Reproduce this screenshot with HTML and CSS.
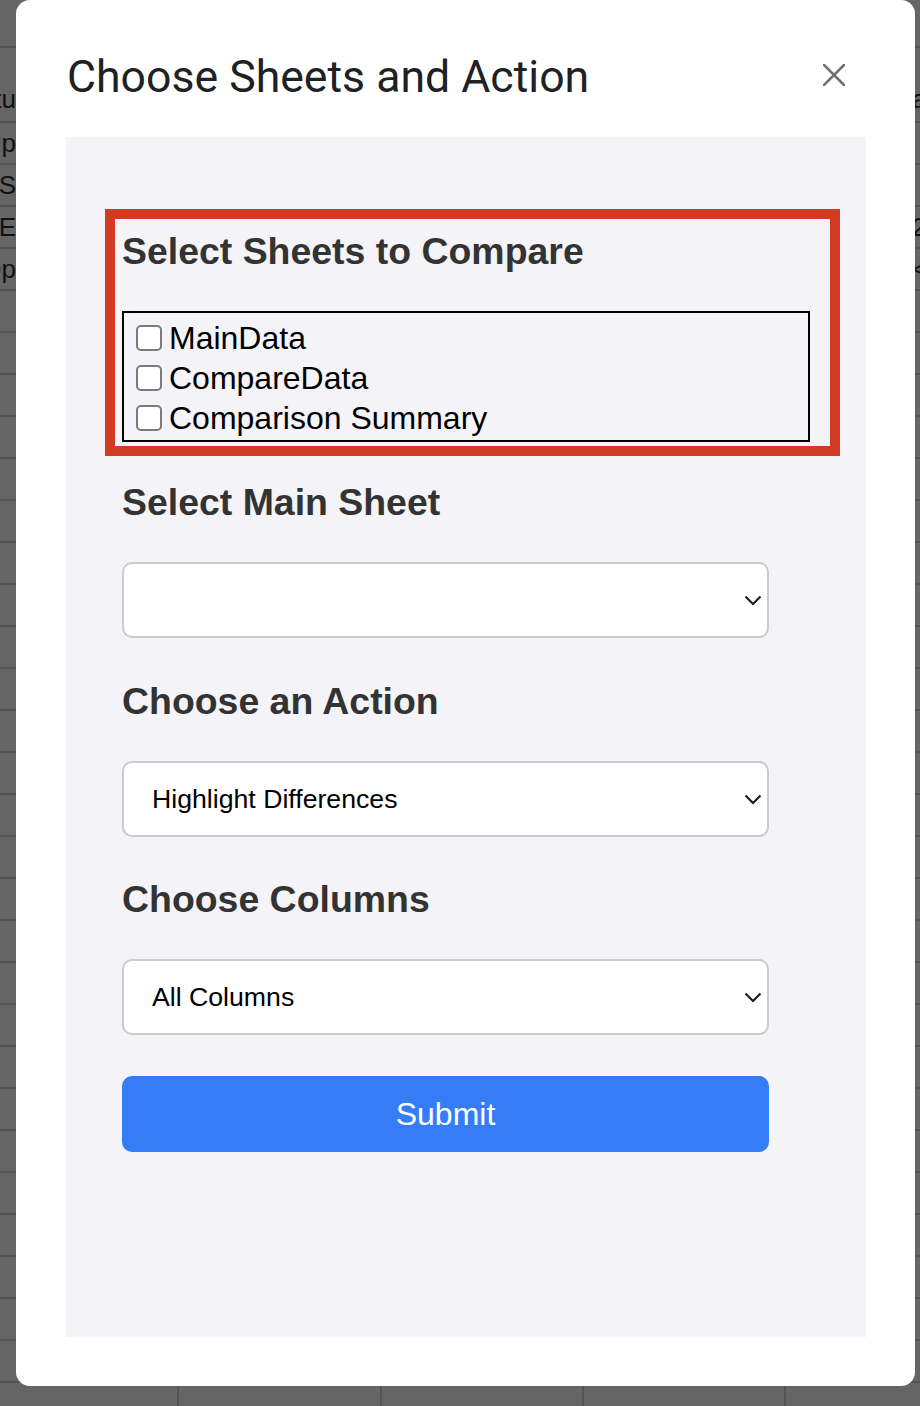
FILE: index.html
```html
<!DOCTYPE html>
<html lang="en">
<head>
<meta charset="utf-8">
<title>Choose Sheets and Action</title>
<link rel="stylesheet" href="styles.css">
</head>
<body>
<div class="sheet" aria-hidden="true">
  <div class="row r0"></div>
  <div class="row r1"><span class="c1">Statu</span><span class="c2">a</span></div>
  <div class="row"><span class="c1">Help</span></div>
  <div class="row"><span class="c1">US</span></div>
  <div class="row"><span class="c1">NE</span><span class="c2">2</span></div>
  <div class="row"><span class="c1">Op</span><span class="c2">&lt;</span></div>
  <div class="row"></div><div class="row"></div><div class="row"></div><div class="row"></div>
  <div class="row"></div><div class="row"></div><div class="row"></div><div class="row"></div>
  <div class="row"></div><div class="row"></div><div class="row"></div><div class="row"></div>
  <div class="row"></div><div class="row"></div><div class="row"></div><div class="row"></div>
  <div class="row"></div><div class="row"></div><div class="row"></div><div class="row"></div>
  <div class="row"></div><div class="row"></div><div class="row"></div><div class="row"></div>
  <div class="row"></div><div class="row"></div><div class="row"></div><div class="row"></div>
</div>

<div class="dialog" role="dialog" aria-labelledby="dlg-title">
  <div class="dlg-head">
    <h2 id="dlg-title" class="dlg-title">Choose Sheets and Action</h2>
    <button class="close" aria-label="Close">
      <svg width="22" height="22" viewBox="0 0 22 22"><path d="M1 1 L21 21 M21 1 L1 21" stroke="#6f6f6f" stroke-width="2.6" stroke-linecap="square" fill="none"/></svg>
    </button>
  </div>
  <div class="panel">
    <div class="annot">
      <h3 class="heading first">Select Sheets to Compare</h3>
      <div class="checks">
        <label class="check"><input type="checkbox"><span>MainData</span></label>
        <label class="check"><input type="checkbox"><span>CompareData</span></label>
        <label class="check"><input type="checkbox"><span>Comparison Summary</span></label>
      </div>
    </div>

    <div class="field field-first">
      <h3 class="heading">Select Main Sheet</h3>
      <div class="select-wrap">
        <select class="select"><option></option></select>
        <svg class="chev" width="18" height="11" viewBox="0 0 18 11"><path d="M1.5 1.5 L9 9 L16.5 1.5" stroke="#1f1f1f" stroke-width="2.2" fill="none"/></svg>
      </div>
    </div>

    <div class="field">
      <h3 class="heading">Choose an Action</h3>
      <div class="select-wrap">
        <select class="select"><option>Highlight Differences</option></select>
        <svg class="chev" width="18" height="11" viewBox="0 0 18 11"><path d="M1.5 1.5 L9 9 L16.5 1.5" stroke="#1f1f1f" stroke-width="2.2" fill="none"/></svg>
      </div>
    </div>

    <div class="field">
      <h3 class="heading">Choose Columns</h3>
      <div class="select-wrap">
        <select class="select"><option>All Columns</option></select>
        <svg class="chev" width="18" height="11" viewBox="0 0 18 11"><path d="M1.5 1.5 L9 9 L16.5 1.5" stroke="#1f1f1f" stroke-width="2.2" fill="none"/></svg>
      </div>
    </div>

    <button class="submit">Submit</button>
  </div>
</div>
</body>
</html>
```

FILE: styles.css
```css
html, body {
  margin: 0;
  padding: 0;
}
body {
  width: 920px;
  height: 1406px;
  overflow: hidden;
  position: relative;
  font-family: "Liberation Sans", Arial, sans-serif;
}

/* dimmed spreadsheet behind the modal */
.sheet {
  width: 920px;
  height: 1406px;
  overflow: hidden;
  background-color: #646564;
  background-image:
    linear-gradient(to right, transparent 177px, #535453 177px, #535453 179px, transparent 179px),
    linear-gradient(to right, transparent 380px, #535453 380px, #535453 382px, transparent 382px),
    linear-gradient(to right, transparent 582px, #535453 582px, #535453 584px, transparent 584px),
    linear-gradient(to right, transparent 784px, #535453 784px, #535453 786px, transparent 786px);
}
.row {
  display: flex;
  align-items: center;
  height: 42px;
  box-sizing: border-box;
  border-bottom: 2px solid #535453;
  font-size: 26px;
  color: #111;
}
.r0 { height: 48px; }
.r1 { height: 75px; align-items: flex-end; padding-bottom: 6px; }
.c1 {
  flex: none;
  width: 16px;
  display: flex;
  justify-content: flex-end;
  overflow: hidden;
  white-space: nowrap;
}
.c2 {
  margin-left: auto;
  width: 8px;
  overflow: hidden;
  white-space: nowrap;
}

/* modal */
.dialog {
  position: absolute;
  top: 0;
  left: 16px;
  width: 899px;
  height: 1386px;
  box-sizing: border-box;
  background: #fff;
  border-radius: 14px;
  padding: 49px 49px 0 50px;
}
.dlg-head {
  display: flex;
  justify-content: space-between;
  align-items: flex-start;
  height: 56px;
  margin-bottom: 32px;
}
.dlg-title {
  margin: 0 0 0 1px;
  font-family: Roboto, "Open Sans", sans-serif;
  font-weight: 400;
  font-size: 44.6px;
  line-height: 56px;
  color: #202124;
}
.close {
  margin: 15px 21px 0 0;
  padding: 0;
  border: 0;
  background: none;
  width: 22px;
  height: 22px;
  display: block;
}
.close svg { display: block; }

.panel {
  height: 1200px;
  box-sizing: border-box;
  background: #f3f3f8;
  padding: 72px 56px 0;
}

.annot {
  border: 10px solid #d13b24;
  margin: 0 -30px 0 -17px;
  padding: 11px 20px 4px 7px;
}
.heading {
  margin: 0 0 39px;
  font-family: "Liberation Sans", Arial, sans-serif;
  font-weight: 700;
  font-size: 37.44px;
  line-height: 42px;
  color: #333;
}
.checks {
  border: 2px solid #000;
  padding: 5px 12px 2px;
}
.check {
  display: flex;
  align-items: center;
  height: 40px;
  font-size: 32px;
  color: #000;
}
.check input {
  appearance: none;
  -webkit-appearance: none;
  width: 26px;
  height: 26px;
  margin: 0 7px 0 0;
  box-sizing: border-box;
  border: 2px solid #7a7a7a;
  border-radius: 5px;
  background: #fff;
  flex: none;
}

.field { margin-top: 41.5px; }
.field-first { margin-top: 25px; }
.select-wrap {
  position: relative;
  width: 647px;
}
.select {
  appearance: none;
  -webkit-appearance: none;
  display: block;
  width: 647px;
  height: 76px;
  box-sizing: border-box;
  border: 2px solid #cbcbcb;
  border-radius: 10px;
  background: #fff;
  padding: 0 40px 0 28px;
  font-family: "Liberation Sans", Arial, sans-serif;
  font-size: 26.67px;
  color: #000;
}
.chev {
  position: absolute;
  right: 7px;
  top: 50%;
  margin-top: -5px;
  pointer-events: none;
}

.submit {
  display: block;
  margin-top: 41px;
  width: 647px;
  height: 76px;
  border: 0;
  border-radius: 10px;
  background: #357df6;
  color: #fff;
  font-family: "Liberation Sans", Arial, sans-serif;
  font-size: 32px;
}
```
